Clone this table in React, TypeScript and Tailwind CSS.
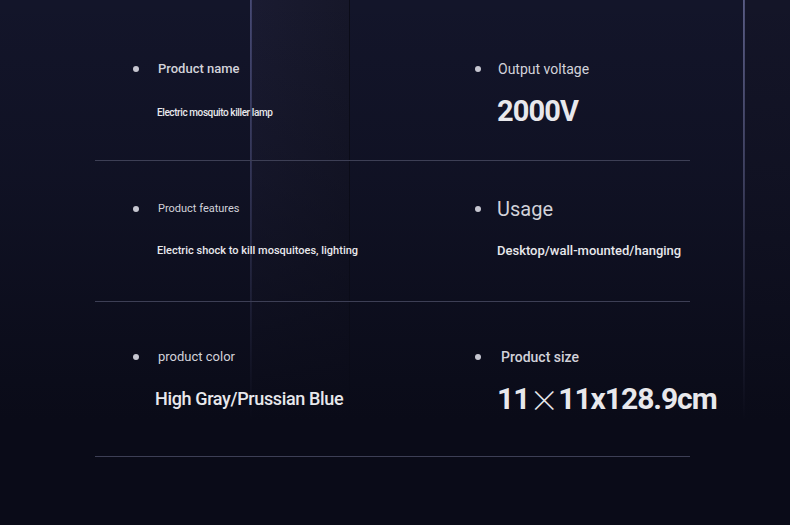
import React from "react";

type Spec = {
  label: string;
  value: React.ReactNode;
  labelClass: string;
  valueClass: string;
};

type Row = {
  pt: string;
  gap: string;
  height: string;
  left: Spec;
  right: Spec;
};

const rows: Row[] = [
  {
    pt: "pt-[59px]",
    gap: "mt-[15px]",
    height: "h-[161px]",
    left: {
      label: "Product name",
      value: "Electric mosquito killer lamp",
      labelClass: "text-[13px] font-medium ml-[19px]",
      valueClass: "text-[10px] font-medium tracking-[-0.04em]",
    },
    right: {
      label: "Output voltage",
      value: "2000V",
      labelClass: "text-[14px] ml-[17px]",
      valueClass: "text-[29px] font-bold tracking-[-0.03em]",
    },
  },
  {
    pt: "pt-[38px]",
    gap: "mt-[14px]",
    height: "h-[141px]",
    left: {
      label: "Product features",
      value: "Electric shock to kill mosquitoes, lighting",
      labelClass: "text-[11px] ml-[19px]",
      valueClass: "text-[11px] font-medium",
    },
    right: {
      label: "Usage",
      value: "Desktop/wall-mounted/hanging",
      labelClass: "text-[20px] ml-[16px]",
      valueClass: "text-[13px] font-medium",
    },
  },
  {
    pt: "pt-[45px]",
    gap: "mt-[13px]",
    height: "h-[155px]",
    left: {
      label: "product color",
      value: "High Gray/Prussian Blue",
      labelClass: "text-[13px] ml-[19px]",
      valueClass: "text-[18px] font-medium tracking-[-0.02em] -ml-[2px]",
    },
    right: {
      label: "Product size",
      value: (
        <>
          11
          <span className="font-light" style={{ fontFamily: "'Noto Sans CJK SC', sans-serif" }}>
            ×
          </span>
          11x128.9cm
        </>
      ),
      labelClass: "text-[14px] font-medium ml-[20px]",
      valueClass: "text-[30px] font-bold tracking-[-0.035em]",
    },
  },
];

function Cell({ spec, gap, right }: { spec: Spec; gap: string; right?: boolean }) {
  return (
    <div className="pl-[38px]">
      <div className="flex h-[20px] items-center">
        <span className="h-[6px] w-[6px] rounded-full bg-[#c6c6d0]" />
        <span className={`text-[#d2d2da] ${spec.labelClass}`}>{spec.label}</span>
      </div>
      <div
        className={`flex h-[36px] items-center ${right ? "pl-[22px]" : "pl-[24px]"} text-[#e8e8ec] ${gap} ${spec.valueClass}`}
      >
        {spec.value}
      </div>
    </div>
  );
}

export default function App() {
  return (
    <div
      className="h-[525px] w-[790px] overflow-hidden bg-[#13152a] bg-[linear-gradient(to_bottom,rgba(10,11,24,0)_0%,rgba(10,11,24,0.35)_35%,#0a0b18_80%),linear-gradient(90deg,transparent_250px,#4b4e7a_250px,#3a3c62_252px,#1a1b31_252px,#161729_349px,#0b0c18_349px,#0b0c18_350px,transparent_350px,transparent_743px,#5d6088_743px,#4a4c72_745px,#141528_745px)]"
      style={{ fontFamily: "Roboto, 'Noto Sans', sans-serif" }}
    >
      <div className="ml-[95px] w-[595px]">
        {rows.map((row, i) => (
          <div key={i} className={`${row.height} border-b border-[#3d3f55] ${row.pt}`}>
            <div className="grid grid-cols-[342px_1fr]">
              <Cell spec={row.left} gap={row.gap} />
              <Cell spec={row.right} gap={row.gap} right />
            </div>
          </div>
        ))}
      </div>
    </div>
  );
}
